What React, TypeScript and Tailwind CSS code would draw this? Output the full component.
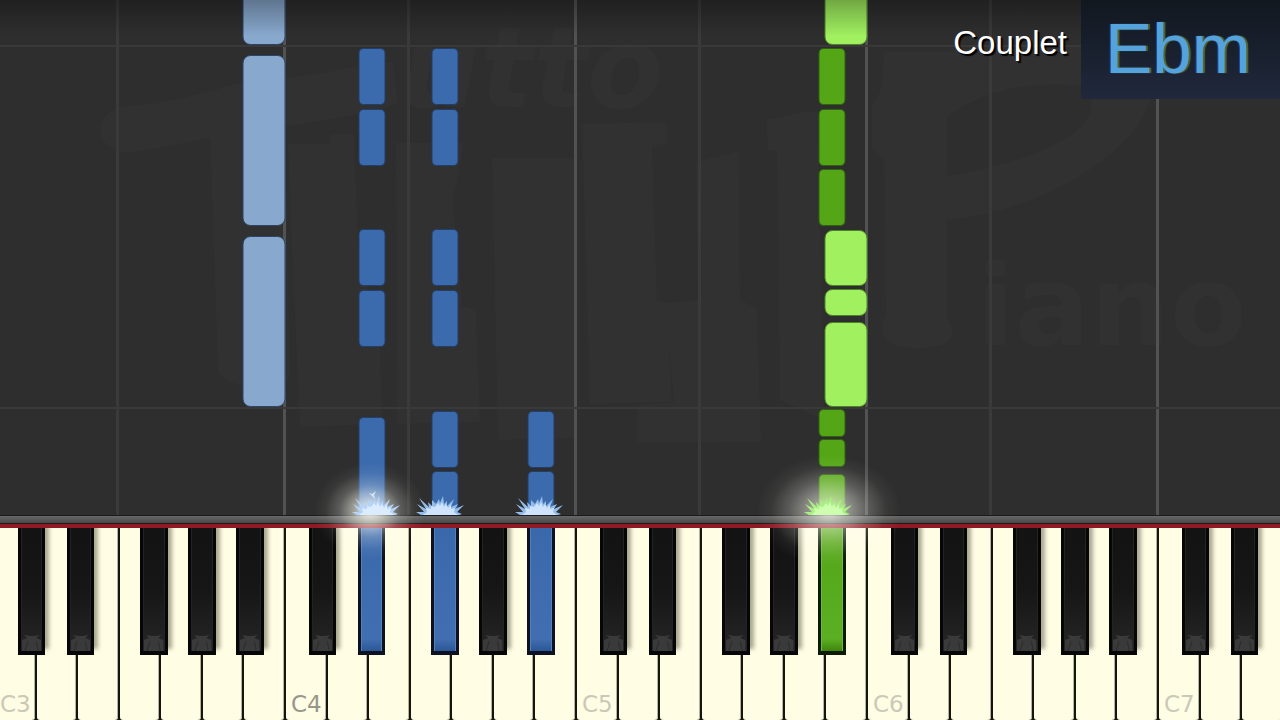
import clsx from 'clsx';

type Kind = 'lowWhite' | 'lowBlack' | 'highWhite' | 'highBlack';

// x is the centre of the lane on a 1280 wide stage,
// start is the distance between the note and the strike line
type Note = { x: number; start: number; length: number; kind: Kind };

const STAGE_WIDTH = 1280;

const percent = (x: number) => `${(x / STAGE_WIDTH) * 100}%`;

const lane = (x: number, kind: Kind, items: [number, number][]): Note[] =>
  items.map(([start, length]) => ({ x, kind, start, length }));

const notes: Note[] = [
  ...lane(264, 'lowWhite', [[108, 171], [289, 171], [470, 60]]),
  ...lane(372, 'lowBlack', [[-6, 104], [168, 57], [229, 57], [349, 57], [410, 57]]),
  ...lane(445, 'lowBlack', [[-12, 56], [47, 57], [168, 57], [229, 57], [349, 57], [410, 57]]),
  ...lane(541, 'lowBlack', [[-12, 56], [47, 57]]),
  ...lane(832, 'highBlack', [[-16, 57], [48, 28], [78, 28], [289, 57], [349, 57], [410, 57]]),
  ...lane(846, 'highWhite', [[108, 85], [199, 27], [229, 56], [470, 60]]),
];

const noteStyles: Record<Kind, string> = {
  lowWhite: 'w-[43px] rounded-lg border-[#2b4468] bg-[#88a8cd]',
  lowBlack: 'w-[27px] rounded-[5px] border-[#223f6b] bg-[#3c6bad]',
  highWhite: 'w-[43px] rounded-lg border-[#4a8426] bg-[#a0f05f]',
  highBlack: 'w-[27px] rounded-[5px] border-[#2f610e] bg-[#55a616]',
};

const octaves = [3, 4, 5, 6, 7];
const whiteNames = ['C', 'D', 'E', 'F', 'G', 'A', 'B'];

const blackKeys = [
  { name: 'C#', place: 'left-[7.9%]' },
  { name: 'D#', place: 'left-[24.7%]' },
  { name: 'F#', place: 'left-[49.9%]' },
  { name: 'G#', place: 'left-[66.4%]' },
  { name: 'A#', place: 'left-[82.9%]' },
];

const pressed: Record<string, 'blue' | 'green'> = {
  'D#4': 'blue',
  'F#4': 'blue',
  'A#4': 'blue',
  'A#5': 'green',
};

const beatLines = ['bottom-[106px]', 'bottom-[468px]'];

function Watermark() {
  return (
    <svg
      className="absolute inset-0 h-full w-full"
      viewBox="0 0 1280 515"
      preserveAspectRatio="none"
      fill="#313131"
      aria-hidden="true"
    >
      <path d="M125 106 C180 104 215 86 250 82 C320 76 350 66 392 62 L398 104 C350 116 320 122 285 126 L290 375 C284 390 225 392 218 370 L210 138 L130 153 C90 150 92 112 125 106Z" />
      <path d="M288 144 L330 144 L330 134 L354 134 L358 240 L380 340 L382 424 L300 427 L292 250Z" />
      <path d="M396 143 L464 143 L453 200 L462 306 L476 310 L480 422 L397 424Z" />
      <path d="M492 158 L574 158 L574 438 L498 440Z" />
      <path d="M582 124 L666 122 L666 144 L652 146 L657 300 L667 303 L672 402 L590 404Z" />
      <path d="M696 162 L739 151 L740 300 L757 308 L761 442 L638 443 L638 405 L674 402 L665 303 L698 300Z" />
      <path d="M766 120 L802 112 L818 112 L824 420 L780 400 L777 150 L768 150Z" />
      <path d="M872 105 C886 90 882 66 884 52 L944 52 C1000 46 1060 28 1150 70 C1170 130 1060 210 947 220 L947 316 C960 340 948 348 916 348 C884 348 876 334 886 314 L884 158 L872 150Z" />
      <path
        fill="#2e2e2e"
        d="M947 118 C975 92 1030 80 1082 86 C1110 110 1080 154 947 176Z"
      />
      <g fontFamily="DejaVu Sans, sans-serif" fontWeight="700" fontSize="112">
        <text x="400" y="107" fontStyle="italic">utto</text>
        <text x="976" y="345">iano</text>
      </g>
    </svg>
  );
}

function Grid() {
  return (
    <div className="absolute inset-0 overflow-hidden">
      {beatLines.map((line) => (
        <div key={line} className={clsx('absolute h-0.5 w-full bg-[#393939]', line)} />
      ))}
      <div className="-ml-[5px] flex h-full w-[113.67%]">
        {octaves.map((octave) => (
          <div key={octave} className="flex flex-1 border-r-[3px] border-[#525252]">
            <div className="w-[43%] border-r-[3px] border-[#3a3a3a]" />
          </div>
        ))}
      </div>
    </div>
  );
}

function NoteBlock({ note }: { note: Note }) {
  return (
    <div
      className={clsx('absolute -translate-x-1/2 border', noteStyles[note.kind])}
      style={{ left: percent(note.x), bottom: note.start, height: note.length }}
    />
  );
}

function Spark({ x, color, edge }: { x: number; color: string; edge: string }) {
  return (
    <svg
      className="absolute bottom-0 h-5 w-12 -translate-x-1/2"
      style={{ left: percent(x) }}
      viewBox="0 0 48 20"
      fill={edge}
      aria-hidden="true"
    >
      <path d="M5 20 L0 17 L8 17 L1 9 L10 14 L3 3 L13 12 L12 7 L16 11 L16 5 L20 9 L23 4 L24 8 L27 1 L28 9 L31 6 L31 11 L38 4 L35 12 L42 9 L39 14 L48 10 L41 17 L46 19 L43 20Z" />
      <path
        fill={color}
        d="M7 20 L11 17 L10 13 L15 14 L15 11 L19 12 L22 8 L24 11 L26 7 L28 12 L30 9 L32 13 L35 9 L35 14 L39 13 L38 17 L42 20Z"
      />
    </svg>
  );
}

function Glow({ x, className }: { x: number; className: string }) {
  return (
    <div
      className={clsx('absolute -translate-x-1/2 translate-y-1/2 rounded-full', className)}
      style={{ left: percent(x) }}
    />
  );
}

function Effects() {
  return (
    <div className="pointer-events-none absolute inset-0 z-20">
      <Glow
        x={370}
        className="bottom-1 h-24 w-28 bg-[radial-gradient(closest-side,rgba(255,255,245,0.9),rgba(255,255,245,0.6)_25%,rgba(255,255,245,0.22)_55%,rgba(255,255,245,0.05)_80%,transparent)]"
      />
      <Glow
        x={829}
        className="bottom-1 h-28 w-36 bg-[radial-gradient(closest-side,rgba(255,255,245,0.8),rgba(255,255,245,0.5)_25%,rgba(255,255,245,0.22)_55%,rgba(255,255,245,0.05)_80%,transparent)]"
      />
      <Spark x={376} color="#dcecff" edge="#b4d4f8" />
      <Spark x={440} color="#cfe4fc" edge="#94bcea" />
      <Spark x={539} color="#cfe4fc" edge="#94bcea" />
      <Spark x={828} color="#cdffae" edge="#a9f083" />
      <svg
        className="absolute bottom-4 size-2 -translate-x-1/2"
        style={{ left: percent(373) }}
        viewBox="0 0 8 8"
        fill="#d3e6fc"
        aria-hidden="true"
      >
        <path d="M0 2 L3 3 L7 0 L5 4 L6 8 L3 5Z" />
      </svg>
    </div>
  );
}

function ChordBanner() {
  return (
    <div className="absolute top-0 right-0 z-30 flex font-['Liberation_Sans',Arial,sans-serif]">
      <p className="pt-6 pr-3.5 text-[33px] leading-[38px] text-white [text-shadow:2px_2px_1px_#000]">
        Couplet
      </p>
      <p className="h-[99px] w-[199px] bg-linear-to-b from-[#111820] to-[#20283c] pt-2 pl-6 text-[71px] leading-[82px] text-[#55a3dc] [text-shadow:2px_0_1px_#59692c,-1px_0_1px_#1d4fa8]">
        Ebm
      </p>
    </div>
  );
}

function BlackKey({ name, place }: { name: string; place: string }) {
  const light = pressed[name];

  return (
    <button
      type="button"
      aria-label={name}
      className={clsx(
        'absolute top-0 flex h-[127px] w-[9.4%] items-end border-x-[3px] border-b-4',
        place,
        !light &&
          'border-[#060606] bg-linear-to-b from-[#131313] via-[#161616] to-[#262626] shadow-[4px_-6px_4px_rgba(40,40,20,0.4)]',
        light === 'blue' && 'border-[#0c1220] bg-linear-to-b from-[#3a69ab] to-[#426fb1]',
        light === 'green' && 'border-[#0d1a06] bg-linear-to-b from-[#54a516] to-[#5cb024]'
      )}
    >
      <span
        className={clsx(
          'absolute inset-0 border-x',
          !light && 'border-[#232323]',
          light === 'blue' && 'border-[#5280bd]',
          light === 'green' && 'border-[#6fb838]'
        )}
      />
      {light ? (
        <span
          className={clsx(
            'h-3 w-full bg-linear-to-b from-transparent',
            light === 'blue' ? 'to-[#2b5697]' : 'to-[#3f850b]'
          )}
        />
      ) : (
        <svg className="h-4 w-full" viewBox="0 0 21 16" preserveAspectRatio="none" aria-hidden="true">
          <path fill="#3a3a3a" d="M1 16 L1 5 L6 3 L3 0 L9 1 L13 1 L18 0 L15 3 L20 5 L20 16Z" />
          <path stroke="#2c2c2c" fill="none" d="M4 16 L7 6 M17 16 L15 6" />
        </svg>
      )}
    </button>
  );
}

function Octave({ number }: { number: number }) {
  return (
    <div className="relative flex flex-1">
      {whiteNames.map((name) => (
        <button
          key={name}
          type="button"
          aria-label={`${name}${number}`}
          className="flex flex-1 items-end border-r-2 border-[#15150f] bg-[#15150f]"
        >
          <span className="flex h-full w-full items-end rounded-b-[3px] bg-[#fffde4] shadow-[inset_-1px_0_0_#b5b4a0]">
            {name === 'C' && (
              <span
                className={clsx(
                  "pl-[5px] font-['DejaVu_Sans',Verdana,sans-serif] text-[23px] leading-8",
                  number === 4 ? 'text-[#97968a]' : 'text-[#cac9b7]'
                )}
              >
                {name}
                {number}
              </span>
            )}
          </span>
        </button>
      ))}
      {blackKeys.map((key) => (
        <BlackKey key={key.name} name={`${key.name}${number}`} place={key.place} />
      ))}
    </div>
  );
}

export default function App() {
  return (
    <main className="flex min-h-screen flex-col overflow-hidden bg-[#2e2e2e]">
      <section className="relative flex-1" aria-label="Notes">
        <div className="absolute inset-0 overflow-hidden">
          <Watermark />
          <Grid />
          {notes.map((note) => (
            <NoteBlock key={`${note.x}-${note.start}`} note={note} />
          ))}
          <div className="absolute inset-x-0 top-0 h-9 bg-linear-to-b from-black/30 to-transparent" />
        </div>
        <Effects />
        <ChordBanner />
      </section>

      <div className="h-[9px] border-y border-[#1c1c1c] bg-linear-to-b from-[#686868] to-[#484848]" />
      <div className="h-1 bg-[#8f1a24]" />

      <section className="h-48 overflow-hidden" aria-label="Keyboard">
        <div className="-ml-[5px] flex h-full w-[113.67%]">
          {octaves.map((octave) => (
            <Octave key={octave} number={octave} />
          ))}
        </div>
      </section>
    </main>
  );
}
